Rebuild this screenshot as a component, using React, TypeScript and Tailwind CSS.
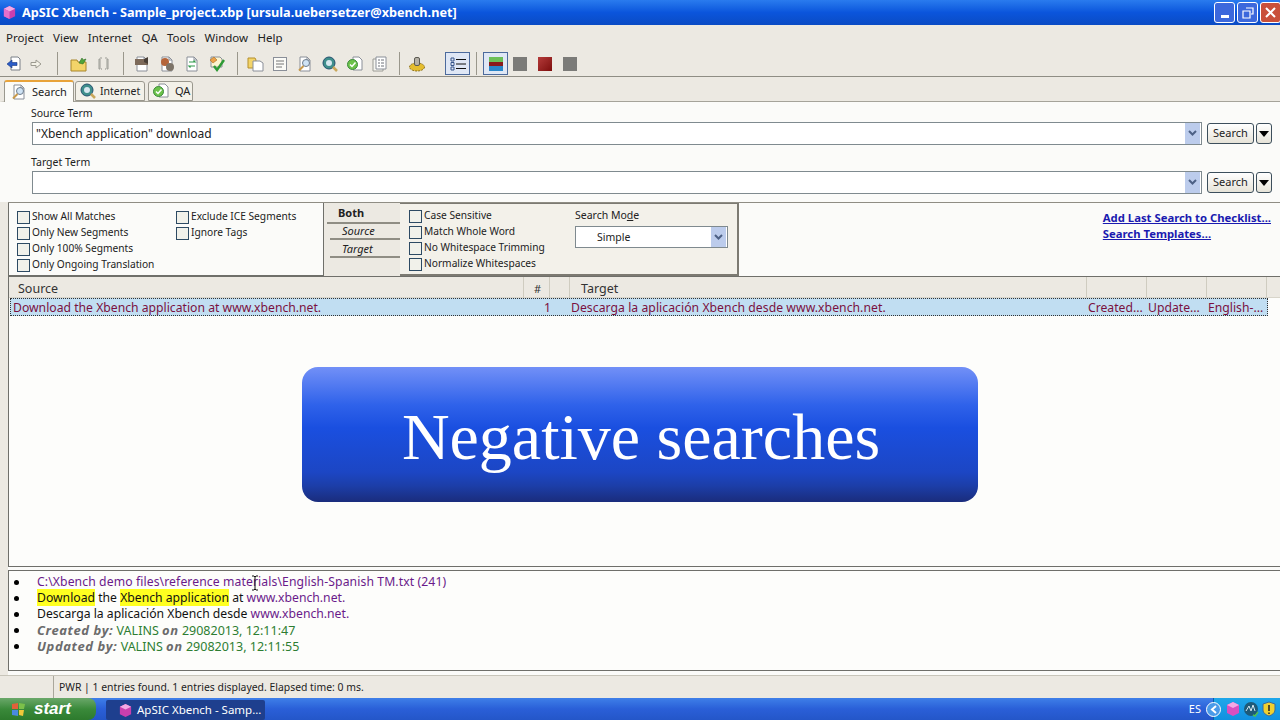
import React from "react";

const UI = { fontFamily: '"Noto Sans", Tahoma, sans-serif' };

function Doc({ children }: { children?: React.ReactNode }) {
  return (
    <svg width="16" height="16" viewBox="0 0 16 16" className="shrink-0">
      <path d="M3 1h7l3 3v11H3z" fill="#fff" stroke="#8a8f98" />
      <path d="M10 1v3h3" fill="none" stroke="#8a8f98" />
      {children}
    </svg>
  );
}
const Sep = () => <div className="w-px h-[23px] bg-[#9a978c]" />;
const Magnifier = () => (
  <>
    <circle cx="9" cy="7" r="3.5" fill="#cfe3f5" stroke="#6d7c8c" />
    <path d="M6.5 10 2 14.5" stroke="#c99a4a" strokeWidth="2" />
  </>
);
const Globe = () => (
  <svg width="16" height="16" viewBox="0 0 16 16" className="shrink-0">
    <circle cx="7" cy="7" r="6" fill="#3f8f8c" stroke="#24506e" />
    <circle cx="7" cy="7" r="3" fill="#d7e8f0" />
    <path d="M11 11l4 4" stroke="#c9a85a" strokeWidth="2.5" />
  </svg>
);
const CheckDoc = () => (
  <svg width="16" height="16" viewBox="0 0 16 16" className="shrink-0">
    <path d="M6 1h6l3 3v10H6z" fill="#fff" stroke="#8a8f98" />
    <circle cx="5.5" cy="8.5" r="5" fill="#6cc24a" stroke="#3c8a3c" />
    <path d="M3 8.5l2 2 3.500-4" fill="none" stroke="#fff" strokeWidth="1.5" />
  </svg>
);

function Toolbar() {
  return (
    <div className="h-[26px] flex items-center pl-[6px] border-b border-[#8f8d84]">
      <svg width="16" height="16" viewBox="0 0 16 16" className="shrink-0">
        <path d="M5 1h7l2 2v11H5z" fill="#fff" stroke="#7b8088" />
        <path d="M1 8l5-4v2.500h5v3H6V12z" fill="#2a5cc8" stroke="#17357d" strokeWidth=".6" />
      </svg>
      <svg width="12" height="12" viewBox="0 0 12 12" className="ml-[8px] shrink-0">
        <path d="M1 4.500h5V2l5 4-5 4V7.500H1z" fill="#f4f2e8" stroke="#9c9a90" />
      </svg>
      <div className="ml-[15px]"><Sep /></div>
      <svg width="18" height="18" viewBox="0 0 18 18" className="ml-[12px] shrink-0">
        <path d="M1 5h6l1 2h8v9H1z" fill="#f3d469" stroke="#a8862c" />
        <path d="M9 8l3-5 1 2 3-1-3 5z" fill="#4fa53a" stroke="#2e6e23" strokeWidth=".6" />
      </svg>
      <svg width="16" height="16" viewBox="0 0 16 16" className="ml-[7px] shrink-0">
        <path d="M4 3h1v10H4zM12 3h1v10h-1zM5 2h2M10 2h2" fill="none" stroke="#9a9a94" />
        <path d="M6 13h1M10 13h1" stroke="#8a8a84" />
      </svg>
      <div className="ml-[12px]"><Sep /></div>
      <div className="ml-[10px] flex items-center gap-[9px]">
        <Doc><rect x="1" y="3" width="13" height="6" fill="#7d6a5a" /><path d="M10 3l4-2v7l-4-2z" fill="#4a4038" /></Doc>
        <Doc><circle cx="6" cy="6" r="4" fill="#b5653a" /><circle cx="11" cy="11" r="4" fill="#7d7468" /></Doc>
        <Doc><path d="M5 6h6l-1.500-1.500M11 10H5l1.500 1.500" fill="none" stroke="#2f9a4a" strokeWidth="1.200" /></Doc>
      </div>
      <svg width="18" height="18" viewBox="0 0 18 18" className="ml-[8px] shrink-0">
        <path d="M3 2h9l2 2v8H3z" fill="#fbf4d0" stroke="#8a8f98" />
        <path d="M2 5l4-3 3 3-4 3z" fill="#eba24a" stroke="#a86a1e" strokeWidth=".6" />
        <path d="M6 11l3 4 7-10" fill="none" stroke="#2d9a35" strokeWidth="2.400" />
      </svg>
      <div className="ml-[11px]"><Sep /></div>
      <div className="ml-[9px] flex items-center gap-[8px]">
        <svg width="17" height="16" viewBox="0 0 17 16">
          <path d="M1 2h7l1 2v8H1z" fill="#f3d469" stroke="#b58f2c" />
          <path d="M6 5h7l3 2v8H6z" fill="#fff" stroke="#8a8f98" />
        </svg>
        <svg width="16" height="16" viewBox="0 0 16 16">
          <rect x="1.500" y="1.500" width="13" height="13" fill="#fbfbf7" stroke="#8a8f98" />
          <path d="M4 5h8M4 8h8M4 11h6" stroke="#777" />
        </svg>
        <div className="ml-px"><Doc><Magnifier /></Doc></div>
        <div className="ml-px"><Globe /></div>
        <div className="ml-px"><CheckDoc /></div>
        <svg width="16" height="16" viewBox="0 0 16 16" className="ml-px">
          <path d="M1 3h10v12H1z" fill="#f5f5f0" stroke="#9a9a94" />
          <path d="M4 1h10v12H4z" fill="#fff" stroke="#8a8f98" />
          <path d="M6 4h2M9 4h3M6 7h2M9 7h3M6 10h2M9 10h3" stroke="#6c7078" />
        </svg>
      </div>
      <div className="ml-[11px]"><Sep /></div>
      <svg width="18" height="18" viewBox="0 0 18 18" className="ml-[8px] shrink-0">
        <ellipse cx="9" cy="12" rx="7.500" ry="4" fill="#e5bd2f" stroke="#8a6d14" strokeDasharray="2 1" />
        <rect x="6.500" y="2.500" width="5" height="8" rx="1.500" fill="#b5b1a6" stroke="#5c5a52" />
      </svg>
      <div className="ml-[19px] w-[25px] h-[23px] bg-[#dfe7f5] border border-[#4c6a9c] flex items-center justify-center">
        <svg width="16" height="14" viewBox="0 0 16 14">
          <path d="M1 1h3v3H1zM1 5.500h3v3H1zM1 10h3v3H1z" fill="#dfe7f5" stroke="#36558a" />
          <path d="M6 2.500h10M6 7h10M6 11.500h10" stroke="#111" />
        </svg>
      </div>
      <div className="ml-[6px]"><Sep /></div>
      <div className="ml-[6px] w-[25px] h-[23px] bg-[#dfe7f5] border border-[#4c6a9c] flex items-center justify-center">
        <div className="w-[14px] h-[14px] flex flex-col">
          <div className="h-[5px] bg-[#6cbf58]" />
          <div className="h-[4px] bg-[#8a1a1a]" />
          <div className="h-[5px] bg-[#2a86c8]" />
        </div>
      </div>
      <div className="ml-[5px] w-[14px] h-[14px] bg-[#7b7b78]" />
      <div className="ml-[11px] w-[14px] h-[14px] bg-gradient-to-br from-[#b53a3a] to-[#7d0b0b]" />
      <div className="ml-[11px] w-[14px] h-[14px] bg-[#7b7b78]" />
    </div>
  );
}

function Combo({ value }: { value?: string }) {
  return (
    <div className="ml-[32px] w-[1170px] h-[23px] bg-white border border-[#7f8a8f] flex items-center pl-[3px] pr-px text-[12px] text-[#222]">
      <span className="whitespace-nowrap pt-px">{value}</span>
      <div className="ml-auto w-[15px] h-[21px] bg-[#bcccec] flex items-center justify-center">
        <svg width="9" height="7" viewBox="0 0 9 7"><path d="M1 1l3.500 3.500L8 1" fill="none" stroke="#4d6185" strokeWidth="2" /></svg>
      </div>
    </div>
  );
}
function SearchBtns() {
  return (
    <>
      <div className="ml-[5px] w-[47px] h-[21px] rounded-[3px] border border-[#3d4f5c] bg-gradient-to-b from-white to-[#e6e3d8] text-[11px] flex items-center justify-center text-[#222]">Search</div>
      <div className="ml-[2px] w-[16px] h-[21px] rounded-[3px] border border-[#3d4f5c] bg-gradient-to-b from-white to-[#e6e3d8] flex items-center justify-center">
        <svg width="10" height="6" viewBox="0 0 10 6"><path d="M0 0h10L5 6z" fill="#000" /></svg>
      </div>
    </>
  );
}
function Check({ label }: { label: string }) {
  return (
    <div className="h-[16px] flex items-center gap-[2px] text-[10.200px] text-[#222] whitespace-nowrap">
      <div className="w-[13px] h-[13px] border border-[#2d4a63] bg-[#f1f1ea] shrink-0" />
      <span>{label}</span>
    </div>
  );
}
function Bullet({ children }: { children: React.ReactNode }) {
  return (
    <div className="flex items-center h-[16px] whitespace-nowrap">
      <div className="w-[5px] h-[5px] rounded-full bg-black ml-[2px] mr-[18px] shrink-0" />
      <span>{children}</span>
    </div>
  );
}
function By({ children }: { children: React.ReactNode }) {
  return <b className="italic text-[#6b6b6b] text-[13px] tracking-[0.6px]">{children}</b>;
}

export default function App() {
  return (
    <div style={UI} className="relative w-[1280px] h-[720px] overflow-hidden flex flex-col bg-[#ece9e2]">
      {/* title bar */}
      <div className="h-[25px] flex items-center pl-[2px] bg-gradient-to-b from-[#2a7bee] via-[#0b55dc] to-[#0a4bc4]">
        <svg width="15" height="15" viewBox="0 0 16 16" className="shrink-0">
          <path d="M8 1l6 3v8l-6 3-6-3V4z" fill="#c93fae" />
          <path d="M8 1l6 3-6 3-6-3z" fill="#f3a9e4" />
          <path d="M8 7v8l-6-3V4z" fill="#e56fcb" />
        </svg>
        <span className="ml-[5px] text-white text-[12.700px] font-bold whitespace-nowrap">ApSIC Xbench - Sample_project.xbp [ursula.uebersetzer@xbench.net]</span>
        <div className="ml-auto -mr-px flex gap-[2px]">
          <div className="w-[21px] h-[21px] rounded-[3px] border border-white bg-[#3c68dc] flex items-end justify-center pb-[4px]"><div className="w-[8px] h-[3px] bg-white" /></div>
          <div className="w-[21px] h-[21px] rounded-[3px] border border-white bg-[#3c68dc] flex items-center justify-center">
            <svg width="12" height="12" viewBox="0 0 12 12"><path d="M4 1h7v6H9M1 4h7v7H1z" fill="none" stroke="#fff" strokeWidth="1.200" /></svg>
          </div>
          <div className="w-[21px] h-[21px] rounded-[3px] border border-white bg-[#c9503a] flex items-center justify-center">
            <svg width="13" height="13" viewBox="0 0 13 13"><path d="M2 2l9 9M11 2l-9 9" stroke="#fff" strokeWidth="2" /></svg>
          </div>
        </div>
      </div>
      {/* menu */}
      <div className="h-[26px] flex items-center pl-[6px] gap-[9.500px] text-[11.500px] text-[#222]">
        {["Project", "View", "Internet", "QA", "Tools", "Window", "Help"].map((m) => <span key={m}>{m}</span>)}
      </div>
      <Toolbar />
      {/* tabs */}
      <div className="h-[24px] flex items-end pl-[4px] text-[11px] text-[#222] relative z-10">
        <div className="h-[22px] w-[70px] bg-[#fbfbf8] border border-[#9a988e] border-t-[#e8a33a] border-t-2 border-b-0 rounded-t-[3px] flex items-center pl-[6px] gap-[5px] mb-[-1px]">
          <Doc><Magnifier /></Doc><span>Search</span>
        </div>
        <div className="ml-px h-[20px] w-[70px] bg-[#f3f1e9] border border-[#9a988e] rounded-t-[3px] flex items-center pl-[4px] gap-[4px] text-[10.500px]">
          <Globe /><span className="pt-[2px]">Internet</span>
        </div>
        <div className="ml-[3px] h-[20px] w-[45px] bg-[#f3f1e9] border border-[#9a988e] rounded-t-[3px] flex items-center pl-[4px] gap-[6px]">
          <CheckDoc /><span>QA</span>
        </div>
      </div>
      {/* search panel */}
      <div className="flex-1 min-h-0 flex flex-col bg-[#fbfbf9] border-t border-[#a5a39a] border-l-[8px] border-l-[#ece9e2]">
        <div className="h-[100px] -ml-[8px] bg-[#fbfbf9] shrink-0 text-[#222]">
          <div className="pl-[31px] pt-[4px] h-[20px] text-[10.500px] leading-[14px]">Source Term</div>
          <div className="flex items-center"><Combo value={'"Xbench application" download'} /><SearchBtns /></div>
          <div className="pl-[31px] pt-[10px] h-[26px] text-[10.500px] leading-[14px]">Target Term</div>
          <div className="flex items-center"><Combo /><SearchBtns /></div>
        </div>
        {/* options */}
        <div className="h-[74px] shrink-0 flex border-t border-[#8f8d84] bg-[#fbfbf9]">
          <div className="w-[316px] border border-t-0 border-[#6f6f6a] bg-[#fbfbf9] flex pl-[8px] pt-[6px]">
            <div className="w-[159px]">
              <Check label="Show All Matches" />
              <Check label="Only New Segments" />
              <Check label="Only 100% Segments" />
              <Check label="Only Ongoing Translation" />
            </div>
            <div>
              <Check label="Exclude ICE Segments" />
              <Check label="Ignore Tags" />
            </div>
          </div>
          <div className="w-[76px] bg-[#ece9e2] text-[11px] text-[#222] pl-[3px]">
            <div className="h-[21px] font-bold pl-[11px] leading-[20px] border-b-2 border-[#8f8d84]">Both</div>
            <div className="h-[16px] italic pl-[12px] leading-[14px] border-b-2 border-[#8f8d84] ml-[3px]">Source</div>
            <div className="h-[18px] italic pl-[12px] leading-[17px] border-b-2 border-[#8f8d84] ml-[3px]">Target</div>
          </div>
          <div className="w-[339px] bg-[#f3f1ea] border-r-2 border-b-2 border-t border-[#7c7a72] flex pl-[9px] pt-[4px]">
            <div className="w-[166px]">
              <Check label="Case Sensitive" />
              <Check label="Match Whole Word" />
              <Check label="No Whitespace Trimming" />
              <Check label="Normalize Whitespaces" />
            </div>
            <div className="text-[10.500px] text-[#222] -mt-px">
              <div className="h-[16px] leading-[16px]">Search Mo<span className="underline">d</span>e</div>
              <div className="mt-[3px] w-[153px] h-[22px] bg-white border border-[#7f8a8f] flex items-center pl-[21px] pr-px text-[10.500px]">
                <span className="pt-px">Simple</span>
                <div className="ml-auto w-[15px] h-[20px] bg-[#bcccec] flex items-center justify-center">
                  <svg width="9" height="7" viewBox="0 0 9 7"><path d="M1 1l3.500 3.500L8 1" fill="none" stroke="#4d6185" strokeWidth="2" /></svg>
                </div>
              </div>
            </div>
          </div>
          <div className="ml-auto pr-[9px] pt-[7px] text-[11.300px] leading-[16px] font-bold text-[#1a1ab0] underline">
            <div>Add Last Search to Checklist...</div>
            <div>Search Templates...</div>
          </div>
        </div>
        {/* grid */}
        <div className="flex-1 min-h-0 border-t border-b border-l border-[#6f6f6a] bg-[#fdfdfb] flex flex-col">
          <div className="h-[21px] shrink-0 grid grid-cols-[515px_26px_20px_517px_60px_60px_60px_12px] bg-[#ece9e2] text-[12.500px] text-[#333] border-b border-[#d8d5ca]">
            <div className="pl-[9px] leading-[23px] border-r border-[#cfccc0]">Source</div>
            <div className="border-r border-[#cfccc0] text-center pl-[2px] leading-[23px] text-[11px]">#</div>
            <div className="border-r border-[#cfccc0]" />
            <div className="pl-[11px] leading-[23px] border-r border-[#cfccc0]">Target</div>
            <div className="border-r border-[#cfccc0]" />
            <div className="border-r border-[#cfccc0]" />
            <div className="border-r border-[#cfccc0]" />
            <div />
          </div>
          <div className="h-[18px] shrink-0 w-[1258px] ml-px grid grid-cols-[514px_26px_20px_517px_60px_60px_60px] bg-[#c1def2] border border-dotted border-[#333] text-[12.200px] leading-[18px] text-[#7a1040] whitespace-nowrap overflow-hidden">
            <div className="pl-[2px]">Download the Xbench application at www.xbench.net.</div>
            <div className="text-right">1</div>
            <div />
            <div className="tracking-[0.05px]">Descarga la aplicación Xbench desde www.xbench.net.</div>
            <div>Created...</div>
            <div>Update...</div>
            <div>English-...</div>
          </div>
        </div>
        {/* detail */}
        <div className="h-[101px] shrink-0 mt-[3px] mb-[4px] border border-r-0 border-[#6f6f6a] bg-[#fdfdfb] pl-[3px] pt-[3px] text-[12.200px] leading-[16px] text-[#111]">
          <Bullet><span className="text-[#6a1a8a] tracking-[0.1px]">C:\Xbench demo files\reference materials\English-Spanish TM.txt (241)</span></Bullet>
          <Bullet><span className="bg-[#ffff20]">Download</span> the <span className="bg-[#ffff20]">Xbench application</span> at <span className="text-[#6a1a8a]">www.xbench.net.</span></Bullet>
          <Bullet>Descarga la aplicación Xbench desde <span className="text-[#6a1a8a]">www.xbench.net.</span></Bullet>
          <Bullet><span className="text-[#2e7d32] text-[12.500px]"><By>Created by:</By> VALINS <By>on</By> 29082013, 12:11:47</span></Bullet>
          <Bullet><span className="text-[#2e7d32] text-[12.500px]"><By>Updated by:</By> VALINS <By>on</By> 29082013, 12:11:55</span></Bullet>
        </div>
      </div>
      {/* status */}
      <div className="h-[23px] shrink-0 flex items-center text-[10.400px] text-[#222] border-t border-[#c8c5ba]">
        <div className="w-[54px] h-full border-r border-[#aaa79c]" />
        <span className="pl-[5px] pt-px">PWR | 1 entries found. 1 entries displayed. Elapsed time: 0 ms.</span>
      </div>
      {/* taskbar */}
      <div className="h-[22px] shrink-0 flex items-center bg-gradient-to-b from-[#3f7fe8] via-[#2a5fd8] to-[#2456c8]">
        <div className="w-[96px] h-full rounded-r-[8px] bg-gradient-to-b from-[#6aa86a] via-[#3a8a3a] to-[#2d7a2d] flex items-center pl-[11px] gap-[7px]">
          <svg width="16" height="15" viewBox="0 0 16 15">
            <path d="M1 2l6-1v6H1z" fill="#e2603a" /><path d="M8 1l6 1-1 5H8z" fill="#7cc04a" />
            <path d="M1 8h6v6l-6-1z" fill="#4a8ae0" /><path d="M8 8h5l-1 6-4-1z" fill="#f0c83a" />
          </svg>
          <span className="text-white italic font-bold text-[17px]" style={{ fontFamily: '"Liberation Sans", sans-serif' }}>start</span>
        </div>
        <div className="ml-[10px] w-[159px] h-[20px] mt-[2px] rounded-[2px] bg-[#1e3f8e] flex items-center pl-[12px] gap-[4px] text-white text-[11.500px]">
          <svg width="15" height="15" viewBox="0 0 16 16" className="shrink-0">
            <path d="M8 1l6 3v8l-6 3-6-3V4z" fill="#c93fae" />
            <path d="M8 1l6 3-6 3-6-3z" fill="#f3a9e4" />
          </svg>
          <span className="whitespace-nowrap">ApSIC Xbench - Samp...</span>
        </div>
        <span className="ml-auto mr-[12px] text-white text-[11px]">ES</span>
        <div className="w-[67px] h-full bg-gradient-to-b from-[#1fa7ea] to-[#1290e0] border-l border-[#0c5fa8] flex items-center">
          <div className="-ml-[8px] w-[15px] h-[15px] rounded-full bg-[#4a9ae8] border border-white flex items-center justify-center shrink-0">
            <svg width="8" height="9" viewBox="0 0 8 9"><path d="M6 1L2 4.500 6 8" fill="none" stroke="#fff" strokeWidth="2" /></svg>
          </div>
          <svg width="16" height="16" viewBox="0 0 16 16" className="ml-[4px] shrink-0"><path d="M8 1l6 3v8l-6 3-6-3V4z" fill="#d84fc0" /><path d="M8 1l6 3-6 3-6-3z" fill="#f3a9e4" /></svg>
          <svg width="16" height="16" viewBox="0 0 16 16" className="ml-[2px] shrink-0"><circle cx="8" cy="8" r="7" fill="#1e5a78" /><path d="M3 10l3-5 2 5 2-6 2 6" fill="none" stroke="#d8e8f0" /><path d="M10 14l2 1 3-4" fill="none" stroke="#4fc04f" strokeWidth="1.500" /></svg>
          <svg width="14" height="16" viewBox="0 0 14 16" className="ml-[3px] shrink-0"><path d="M7 1l6 2v6c0 3-3 5-6 6-3-1-6-3-6-6V3z" fill="#f0d030" stroke="#3a6a9a" /><path d="M7 4v6M7 11.500v1.500" stroke="#222" strokeWidth="1.500" /></svg>
        </div>
      </div>
      {/* banner over the results */}
      <div className="absolute left-[302px] top-[367px] w-[676px] h-[135px] rounded-[16px] pt-[3px] pl-[2px] bg-[linear-gradient(180deg,#7290f7_0%,#2f62ea_28%,#1a4fe0_45%,#1c46c4_78%,#1c3ea8_88%,#1a2c7c_100%)] flex items-center justify-center text-white text-[66px]" style={{ fontFamily: '"Liberation Serif", serif' }}>
        Negative searches
      </div>
      {/* mouse cursor */}
      <svg width="8" height="16" viewBox="0 0 8 16" className="absolute left-[251px] top-[575px]">
        <path d="M1 1h2l1 1 1-1h2M4 2v12M1 15h2l1-1 1 1h2" fill="none" stroke="#111" />
      </svg>
    </div>
  );
}
